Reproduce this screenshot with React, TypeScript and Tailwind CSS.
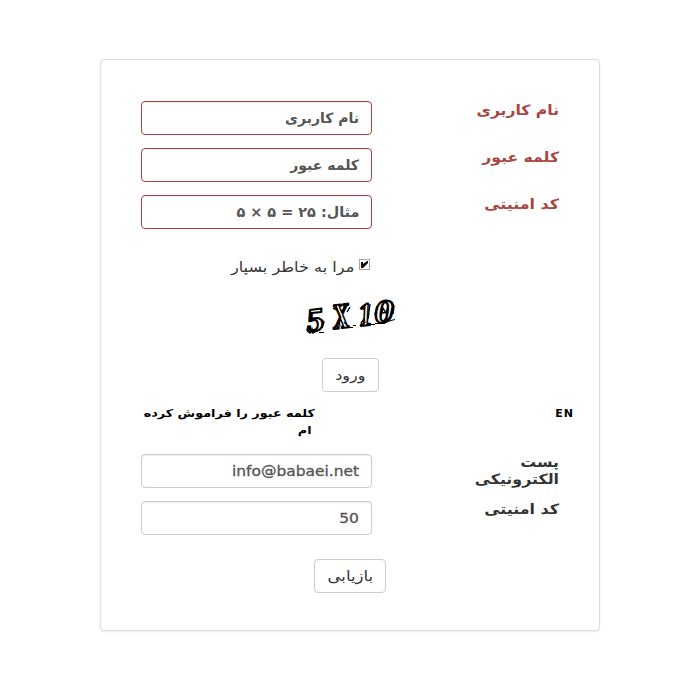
import type { ReactNode } from "react";

function Field({ label, labelStretch, error, children }: { label: ReactNode; labelStretch: string; error?: boolean; children: ReactNode }) {
  return (
    <div className="flex h-[34px] items-start justify-between">
      <label className={`w-[95px] origin-right text-[14px] leading-[17px] font-bold ${labelStretch} ${error ? "mt-px text-[#a94442]" : "text-[#333]"}`}>
        {label}
      </label>
      <div
        className={`flex h-[34px] w-[231px] items-center rounded-[4px] border px-[12px] text-[14px] whitespace-nowrap text-[#555] shadow-[inset_0_1px_1px_rgba(0,0,0,0.075)] ${error ? "border-[#a94442] font-bold" : "border-[#ccc] [-webkit-text-stroke:0.3px_#555]"}`}
      >
        {children}
      </div>
    </div>
  );
}

const glyphs = [
  { char: "5", x: 8, y: 40, size: 33, width: 17, turn: -7 },
  { char: "X", x: 34, y: 37, size: 36, width: 17, turn: -7 },
  { char: "1", x: 60, y: 34, size: 33, width: 13, turn: -5 },
  { char: "0", x: 75, y: 31, size: 33, width: 19, turn: -3 },
];

function Captcha() {
  return (
    <svg width="100" height="50" viewBox="0 0 100 50" className="block" direction="ltr">
      <g fontFamily="Liberation Serif, serif" fontWeight="bold" fontStyle="italic" strokeLinejoin="round">
        {glyphs.map((g) => (
          <text
            key={g.char}
            x={g.x}
            y={g.y}
            fontSize={g.size}
            textLength={g.width}
            lengthAdjust="spacingAndGlyphs"
            transform={`rotate(${g.turn} ${g.x} ${g.y})`}
            fill="white"
            stroke="black"
            strokeWidth="2"
          >
            {g.char}
          </text>
        ))}
      </g>
      <path
        d="M9 27l3-7M8 34l-1 4 3 3 2-4 1 4 4-3M21 27l3 3-2 6M33 16l4 2 3 5M33 37l6-7 1 4M47 20l3-5M44 30l5 5M36 14l5 12M62 15l3-2-1 5M61 31l3-4 1 4M70 12l-2 15M60 17l4-4M77 29l-2-7 2-8M81 24l2-8 3 5 2-6M82 21l6-1M85 29l5-4 2-9M92 10l2 4-1 8"
        fill="none"
        stroke="black"
        strokeWidth="1.4"
      />
      <path d="M19 40.5h5M49 35.5h4M53 33.5h3M71 32.5h4M75 31.5h10M87 29.5l8-2" stroke="black" fill="none" />
    </svg>
  );
}

const button = "flex h-[34px] items-center justify-center rounded-[4px] border border-[#ccc] bg-white text-[14px] leading-[20px] text-[#333]";

export default function App() {
  return (
    <main className="flex h-[685px] w-[700px] justify-center bg-white pt-[59px] [font-family:'DejaVu_Sans',sans-serif]">
      <section dir="rtl" className="h-[572px] w-[500px] rounded-[4px] border border-[#ddd] bg-white px-[40px] pt-[41px] shadow-[0_1px_2px_rgba(0,0,0,0.075)]">
        <div className="flex flex-col gap-[13px]">
          <Field label="نام کاربری" labelStretch="scale-x-[1.115]" error>نام کاربری</Field>
          <Field label="کلمه عبور" labelStretch="scale-x-[1.115]" error>کلمه عبور</Field>
          <Field label="کد امنیتی" labelStretch="scale-x-[1.135]" error>
            <span className="origin-right scale-x-[1.03]">مثال: ۲۵ = ۵ × ۵</span>
          </Field>
        </div>
        <label className="mt-[30px] mr-[189px] flex h-[20px] items-start text-[14px] leading-[20px] text-[#333]">
          <span className="h-[11px] w-[11px] border border-[#aaa49c]">
            <svg width="9" height="9" viewBox="0 0 9 9" className="block">
              <path d="M1 2h2v2l4-3h1v2L3 8H1z" fill="black" />
            </svg>
          </span>
          <span className="mr-[5px] -mt-[2px] origin-right scale-x-[1.15] whitespace-nowrap">مرا به خاطر بسپار</span>
        </label>
        <div className="mt-[13px] flex h-[50px] justify-center"><Captcha /></div>
        <div className="mt-[16px] flex justify-center">
          <button className={`${button} w-[57px]`}><span className="-mt-px scale-x-[1.14]">ورود</span></button>
        </div>
        <div className="-mr-[15px] mt-[13px] flex h-[34px] justify-between text-[11px] leading-[17px] font-bold text-black">
          <a className="tracking-[1px]">EN</a>
          <a className="-ml-[12px] w-[186px] origin-right scale-x-[1.16]">
            <span className="block whitespace-nowrap">کلمه عبور را فراموش کرده</span>
            <span className="block pr-[3px]">ام</span>
          </a>
        </div>
        <div className="mt-[15px] flex flex-col gap-[13px]">
          <Field label={<>پست<br />الکترونیکی</>} labelStretch="scale-x-[1.13]">
            <span className="origin-right scale-x-[1.105]">info@babaei.net</span>
          </Field>
          <Field label="کد امنیتی" labelStretch="scale-x-[1.135]">
            <span className="origin-right scale-x-[1.105]">50</span>
          </Field>
        </div>
        <div className="mt-[24px] flex justify-center">
          <button className={`${button} w-[72px]`}><span className="-mt-px scale-x-[1.18]">بازیابی</span></button>
        </div>
      </section>
    </main>
  );
}
